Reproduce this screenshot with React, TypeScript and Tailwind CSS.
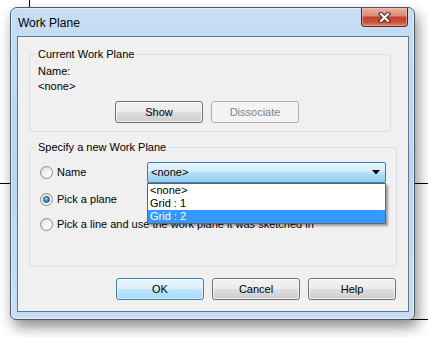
import React from 'react';

const font = { fontFamily: '"Liberation Sans", Arial, sans-serif' };

function Radio({ checked }: { checked?: boolean }) {
  return (
    <span className="relative inline-flex h-[13px] w-[13px] shrink-0 items-center justify-center rounded-full border border-[#8e8f8f] bg-linear-to-br from-[#d4d4d4] to-[#fbfbfb]">
      <span className="h-[9px] w-[9px] rounded-full bg-linear-to-br from-[#e6e6e6] to-[#ffffff]" />
      {checked && (
        <span className="absolute h-[7px] w-[7px] rounded-full border border-[#1c4d70] bg-[radial-gradient(circle_at_40%_35%,#9ee0ff_0%,#3a9ad8_45%,#15557f_100%)]" />
      )}
    </span>
  );
}

function Button({ label, primary, disabled }: { label: string; primary?: boolean; disabled?: boolean }) {
  if (disabled) {
    return (
      <div className="flex h-[22px] w-[88px] items-center justify-center rounded-[3px] border border-[#adb2b5] bg-[#f4f4f4] text-[11px] text-[#838383]">
        {label}
      </div>
    );
  }
  if (primary) {
    return (
      <div className="flex h-[22px] w-[88px] items-center justify-center rounded-[3px] border border-[#3c7fb1] bg-[linear-gradient(180deg,#eaf6fd_0%,#d9f0fc_50%,#bee6fd_51%,#a7d9f5_100%)] text-[11px] text-black shadow-[inset_0_0_0_1px_rgba(255,255,255,0.6)]">
        {label}
      </div>
    );
  }
  return (
    <div className="flex h-[22px] w-[88px] items-center justify-center rounded-[3px] border border-[#707070] bg-[linear-gradient(180deg,#f2f2f2_0%,#ebebeb_50%,#dddddd_51%,#cfcfcf_100%)] text-[11px] text-black shadow-[inset_0_0_0_1px_rgba(255,255,255,0.7)]">
      {label}
    </div>
  );
}

export default function App() {
  return (
    <div className="relative h-[337px] w-[428px] overflow-hidden bg-white pl-[10px] pt-[7px]" style={font}>
      {/* drawing lines behind the dialog */}
      <div className="absolute left-[29px] top-0 h-[8px] w-px bg-black" />
      <div className="absolute left-0 top-[183px] h-px w-full bg-black" />
      <div className="absolute left-[405px] top-[319px] h-px w-[23px] bg-black" />

      {/* Window */}
      <div className="relative z-10 flex h-[313px] w-[405px] flex-col rounded-t-[7px] rounded-b-[6px] border border-[#4f5966] bg-linear-to-b from-[#c6ddf5] via-[#bbd5f0] to-[#c9def3] px-[6px] shadow-[inset_0_0_0_1px_rgba(255,255,255,0.55),3px_7px_14px_rgba(0,0,0,0.45)]">
        {/* Title bar */}
        <div className="flex h-[28px] shrink-0 items-start">
          <span className="mt-[8px] pl-px text-[12px] leading-[14px] text-black">Work Plane</span>
          <div className="ml-auto flex h-[19px] w-[47px] items-center justify-center rounded-b-[4px] border border-t-0 border-[#5e2219] bg-[linear-gradient(180deg,#eab0a3_0%,#d98a77_45%,#c0402a_50%,#c9553d_80%,#e0866b_100%)] shadow-[inset_0_0_0_1px_rgba(255,200,190,0.5)]">
            <svg width="13" height="11" viewBox="0 0 13 11">
              <path d="M3 2 L10 9 M10 2 L3 9" stroke="#3a2a2a" strokeWidth="4.2" strokeLinecap="square" />
              <path d="M3 2 L10 9 M10 2 L3 9" stroke="#ffffff" strokeWidth="2.2" strokeLinecap="square" />
            </svg>
          </div>
        </div>

        {/* Client area */}
        <div className="flex h-[276px] w-[392px] flex-col border border-[#62778e] bg-[#f0f0f0] pl-[11px] pt-[11px] text-[11px] leading-[13px] text-black">
          {/* Current Work Plane */}
          <fieldset className="w-[362px] rounded-[3px] border border-[#d5dfe5] pb-[8px]">
            <legend className="ml-[6px] px-[2px]">Current Work Plane</legend>
            <div className="pl-[8px]">
              <div className="mt-[4px]">Name:</div>
              <div className="mt-[2px]">&lt;none&gt;</div>
              <div className="ml-[77px] mt-[8px] flex gap-[8px]">
                <Button label="Show" />
                <Button label="Dissociate" disabled />
              </div>
            </div>
          </fieldset>

          {/* Specify a new Work Plane */}
          <fieldset className="mt-[9px] w-[368px] rounded-[3px] border border-[#d5dfe5] pb-[31px]">
            <legend className="ml-[6px] px-[2px]">Specify a new Work Plane</legend>
            <div className="mt-[8px] flex h-[21px] items-center pl-[10px] pr-[10px]">
              <Radio />
              <span className="ml-[4px]">Name</span>
              <div className="relative ml-auto w-[239px]">
                <div className="flex h-[21px] items-center rounded-[2px] border border-[#3c7fb1] bg-[linear-gradient(180deg,#e6f4fc_0%,#d3edfb_45%,#b6e0f7_50%,#93cdef_100%)] pl-[3px] pr-[5px]">
                  <span>&lt;none&gt;</span>
                  <svg className="ml-auto" width="8" height="5" viewBox="0 0 8 5">
                    <path d="M0 0 H8 L4 4.5 Z" fill="#000" />
                  </svg>
                </div>
                <div className="absolute left-0 top-full z-20 w-full border border-[#646464] bg-white shadow-[2px_2px_2px_rgba(0,0,0,0.35)]">
                  <div className="h-[13px] pl-[2px]">&lt;none&gt;</div>
                  <div className="h-[13px] pl-[2px]">Grid : 1</div>
                  <div className="h-[13px] bg-[#3399ff] pl-[2px] text-white">Grid : 2</div>
                </div>
              </div>
            </div>
            <div className="mt-[6px] flex h-[21px] items-center pl-[10px]">
              <Radio checked />
              <span className="ml-[4px]">Pick a plane</span>
            </div>
            <div className="mt-[4px] flex h-[21px] items-center pl-[10px]">
              <Radio />
              <span className="ml-[4px]">Pick a line and use the work plane it was sketched in</span>
            </div>
          </fieldset>

          {/* Dialog buttons */}
          <div className="mt-[11px] flex justify-end gap-[8px] pr-[12px]">
            <Button label="OK" primary />
            <Button label="Cancel" />
            <Button label="Help" />
          </div>
        </div>
      </div>
    </div>
  );
}
